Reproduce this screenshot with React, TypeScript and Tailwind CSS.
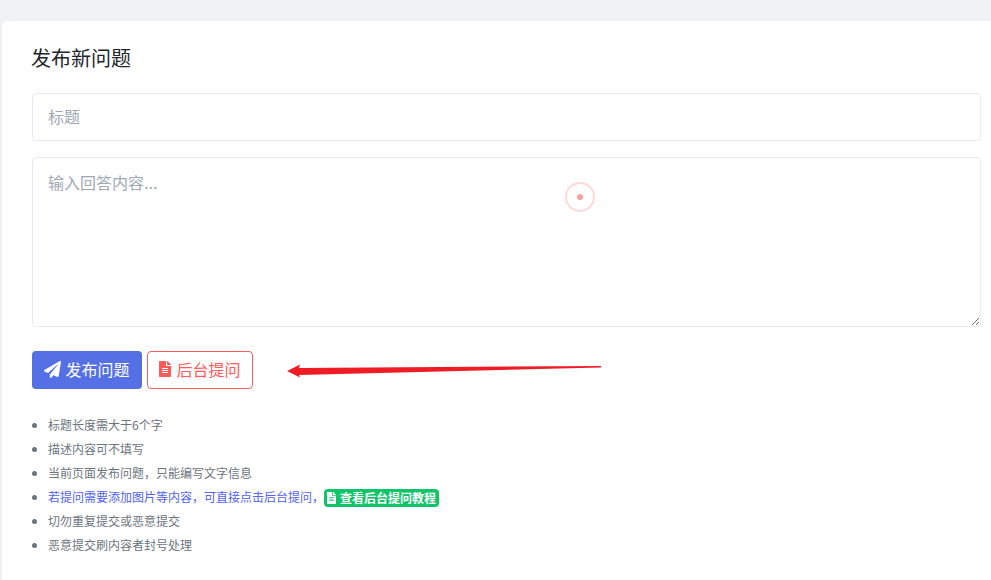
import { FaFileAlt, FaPaperPlane } from "react-icons/fa";

const tips = [
  { id: 1, text: "标题长度需大于6个字" },
  { id: 2, text: "描述内容可不填写" },
  { id: 3, text: "当前页面发布问题，只能编写文字信息" },
  { id: 4, text: "若提问需要添加图片等内容，可直接点击后台提问，", highlight: true },
  { id: 5, text: "切勿重复提交或恶意提交" },
  { id: 6, text: "恶意提交刷内容者封号处理" },
];

const App = () => {
  return (
    <div
      className="relative h-[580px] w-[991px] overflow-hidden bg-[#f0f3f4] pl-[2px] pt-[21px] text-[#6c757d]"
      style={{ fontFamily: '"Noto Sans CJK SC", "Noto Sans", sans-serif' }}
    >
      <div className="h-[570px] rounded-tl-[5px] bg-white pl-[30px] pr-[10px] pt-[22px]">
        <h1 className="-ml-px text-[20px] leading-[30px] font-normal text-[#212529]">发布新问题</h1>

        <input
          placeholder="标题"
          className="mt-[20px] block h-[48px] w-full rounded-[4px] border border-[#e9e9f5] px-[15px] pb-[2px] text-base placeholder:text-[#a0a8b5] outline-none"
        />
        <textarea
          placeholder="输入回答内容..."
          className="mt-[16px] block h-[170px] w-full rounded-[4px] border border-[#e9e9f5] px-[15px] py-3 text-base leading-6 placeholder:text-[#a0a8b5] outline-none"
        />

        <div className="mt-[24px] flex gap-[5px]">
          <button className="flex h-[38px] w-[110px] items-center justify-center gap-[4px] rounded-[4px] bg-[#5570e4] pb-[2px] text-base text-white">
            <FaPaperPlane className="size-[17px]" />
            发布问题
          </button>
          <button className="flex h-[38px] w-[106px] items-center justify-center gap-[5px] rounded-[4px] border border-[#ff5b5b] bg-white pb-[2px] text-base text-[#ff5b5b]">
            <FaFileAlt className="h-[16px] w-[12px]" />
            后台提问
          </button>
        </div>

        <ul className="mt-[24px] list-disc pl-4 text-xs leading-6 marker:text-[#6c757d]">
          {tips.map(({ id, text, highlight }) => {
            return (
              <li key={id} className={highlight ? "text-[#4f63f0]" : ""}>
                {text}
                {highlight && (
                  <span className="inline-flex h-[18px] -translate-y-px items-center gap-[4px] rounded-[4px] bg-[#10c469] px-[3px] align-middle font-bold text-white">
                    <FaFileAlt className="h-[12px] w-[9px]" />
                    查看后台提问教程
                  </span>
                )}
              </li>
            );
          })}
        </ul>
      </div>

      {/* cursor ring over the textarea */}
      <div className="absolute left-[565px] top-[182px] flex size-[30px] items-center justify-center rounded-full border-2 border-[#ffd9d9]">
        <div className="size-[6px] rounded-full bg-[#ff9c9c]" />
      </div>

      {/* hand-drawn arrow pointing at the button */}
      <svg className="absolute left-[285px] top-[362px]" width="318" height="18" viewBox="0 0 318 18">
        <path d="M2 9 L15 2.5 L14 6 L316 4 L316 5.5 L14 13 L15 15.5 Z" fill="#ee1c25" />
      </svg>
    </div>
  );
};

export default App;
